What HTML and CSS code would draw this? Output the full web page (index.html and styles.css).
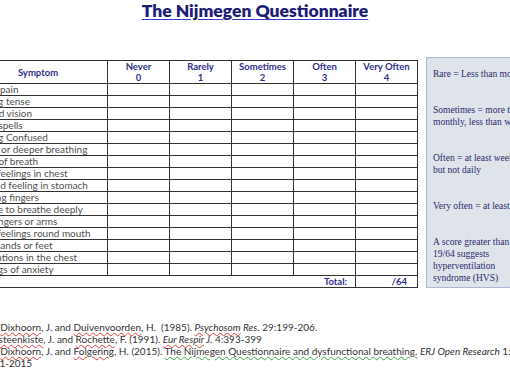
FILE: index.html
```html
<!DOCTYPE html>
<html lang="en">
<head>
<meta charset="utf-8">
<title>The Nijmegen Questionnaire</title>
<link rel="stylesheet" href="styles.css">
</head>
<body>
<div class="page">
  <h1 class="title">The Nijmegen Questionnaire</h1>
  <div class="main">
    <table class="nq">
      <colgroup>
        <col class="c-sym"><col class="c-opt"><col class="c-opt"><col class="c-opt"><col class="c-opt"><col class="c-opt">
      </colgroup>
      <thead>
        <tr>
          <th>Symptom</th>
          <th>Never<br>0</th>
          <th>Rarely<br>1</th>
          <th>Sometimes<br>2</th>
          <th>Often<br>3</th>
          <th>Very Often<br>4</th>
        </tr>
      </thead>
      <tbody>
        <tr><td>Chest pain</td><td></td><td></td><td></td><td></td><td></td></tr>
        <tr><td>Feeling tense</td><td></td><td></td><td></td><td></td><td></td></tr>
        <tr><td>Blurred vision</td><td></td><td></td><td></td><td></td><td></td></tr>
        <tr><td>Dizzy spells</td><td></td><td></td><td></td><td></td><td></td></tr>
        <tr><td>Feeling Confused</td><td></td><td></td><td></td><td></td><td></td></tr>
        <tr><td>Faster or deeper breathing</td><td></td><td></td><td></td><td></td><td></td></tr>
        <tr><td>Short of breath</td><td></td><td></td><td></td><td></td><td></td></tr>
        <tr><td>Tight feelings in chest</td><td></td><td></td><td></td><td></td><td></td></tr>
        <tr><td>Bloated feeling in stomach</td><td></td><td></td><td></td><td></td><td></td></tr>
        <tr><td>Tingling fingers</td><td></td><td></td><td></td><td></td><td></td></tr>
        <tr><td>Unable to breathe deeply</td><td></td><td></td><td></td><td></td><td></td></tr>
        <tr><td>Stiff fingers or arms</td><td></td><td></td><td></td><td></td><td></td></tr>
        <tr><td>Tight feelings round mouth</td><td></td><td></td><td></td><td></td><td></td></tr>
        <tr><td>Cold hands or feet</td><td></td><td></td><td></td><td></td><td></td></tr>
        <tr><td>Palpitations in the chest</td><td></td><td></td><td></td><td></td><td></td></tr>
        <tr><td>Feelings of anxiety</td><td></td><td></td><td></td><td></td><td></td></tr>
      </tbody>
      <tfoot>
        <tr><td colspan="5" class="total-label">Total:</td><td class="total-val">/64</td></tr>
      </tfoot>
    </table>
    <aside class="key">
      <p>Rare = Less than monthly</p>
      <p>Sometimes = more than<br>monthly, less than weekly</p>
      <p>Often = at least weekly<br>but not daily</p>
      <p>Very often = at least daily</p>
      <p>A score greater than<br>19/64 suggests<br>hyperventilation<br>syndrome (HVS)</p>
    </aside>
  </div>
  <div class="refs">
    <div class="ref">van <span class="sp">Dixhoorn</span>, J. and <span class="sp">Duivenvoorden</span>, H. &nbsp;(1985). <em><span class="sp">Psychosom</span> Res</em>. 29:199-206.</div>
    <div class="ref">Van<span class="sp">steenkiste</span>, J. and <span class="sp">Rochette</span>, F. (1991). <em><span class="sp">Eur Respir</span> J</em>. 4:393-399</div>
    <div class="ref">van <span class="sp">Dixhoorn</span>, J. and <span class="sp">Folgering</span>, H. (2015). <span class="gr">The Nijmegen Questionnaire and dysfunctional breathing.</span> <em>ERJ Open Research</em> 1:</div>
    <div class="ref">0001-2015</div>
  </div>
</div>
</body>
</html>
```
FILE: styles.css
```css
html, body {
  margin: 0;
  padding: 0;
  background: #ffffff;
}

body {
  width: 510px;
  height: 382px;
  overflow: hidden;
  font-family: "Lato", "Open Sans", sans-serif;
}

.page {
  display: flex;
  flex-direction: column;
}

.title {
  margin: 0;
  padding-top: 0;
  font-family: "Lato", sans-serif;
  font-weight: 800;
  font-size: 17.5px;
  line-height: 21px;
  color: #1d1d78;
  text-align: center;
  text-decoration: underline;
  text-decoration-color: #3c3cc4;
  text-underline-offset: 2px;
}

.main {
  display: flex;
  align-items: flex-end;
  margin-top: 36px;
}

.nq {
  margin-left: -32px;
  flex: none;
  width: 449px;
  table-layout: fixed;
  border-collapse: collapse;
  font-size: 10px;
}

.c-sym { width: 139px; }
.c-opt { width: 62px; }

.nq th,
.nq td {
  border: 1px solid #333333;
  padding: 0;
}

.nq th {
  height: 22px;
  font-weight: 700;
  font-size: 9.5px;
  line-height: 11px;
  color: #2e2e8e;
  text-align: center;
  vertical-align: middle;
}

.nq td {
  height: 11px;
  line-height: 11px;
  color: #505050;
  padding-left: 3px;
  white-space: nowrap;
  overflow: hidden;
}

.nq tfoot td {
  border-left: none;
  border-bottom: 1px solid #333333;
  font-weight: 700;
  font-size: 9.5px;
  color: #2e2e8e;
  text-align: right;
}

.nq td.total-label { padding-right: 8px; }
.nq td.total-val { padding-right: 10px; border-right: 1px solid #333333; }

.key {
  flex: none;
  margin-left: 8px;
  width: 120px;
  padding: 10px 0 3px 6px;
  background: #dfe4ea;
  border: 1px solid #a9bad0;
  font-family: "Liberation Serif", serif;
  font-size: 9.5px;
  line-height: 12px;
  color: #2a2a6e;
  white-space: nowrap;
}

.key p {
  margin: 0 0 24px 0;
}

.key p:last-child {
  margin-bottom: 0;
}

.refs {
  margin-top: 33px;
  margin-left: -18px;
  font-size: 10px;
  line-height: 12px;
  color: #333333;
  white-space: nowrap;
}

.sp {
  text-decoration: underline wavy #e23b3b;
  text-decoration-thickness: 1px;
  text-underline-offset: 1px;
}

.gr {
  text-decoration: underline wavy #3aa64a;
  text-decoration-thickness: 1px;
  text-underline-offset: 1px;
}
```
